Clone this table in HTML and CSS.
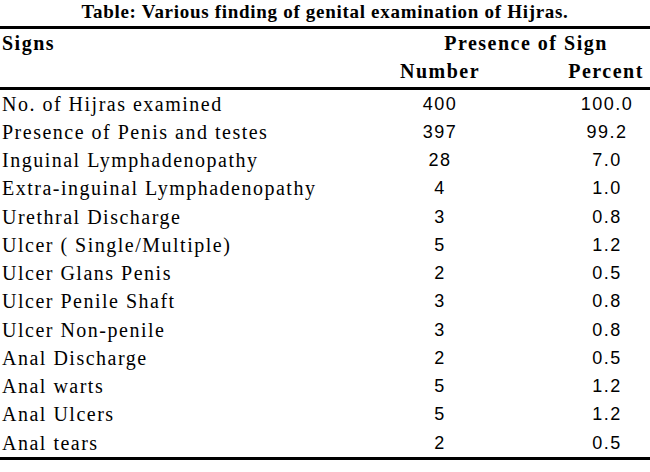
FILE: index.html
```html
<!DOCTYPE html>
<html>
<head>
<meta charset="utf-8">
<link rel="stylesheet" href="styles.css">
</head>
<body>
<div class="page">
  <div class="title">Table: Various finding of genital examination of Hijras.</div>
  <table class="data">
    <colgroup>
      <col class="c-sign">
      <col class="c-num">
      <col class="c-pct">
    </colgroup>
    <thead>
      <tr class="h1">
        <th class="sign">Signs</th>
        <th class="group" colspan="2">Presence of Sign</th>
      </tr>
      <tr class="h2">
        <th class="sign"></th>
        <th class="num">Number</th>
        <th class="pct">Percent</th>
      </tr>
    </thead>
    <tbody>
      <tr><td class="lbl">No. of Hijras examined</td><td class="num">400</td><td class="pct">100.0</td></tr>
      <tr><td class="lbl">Presence of Penis and testes</td><td class="num">397</td><td class="pct">99.2</td></tr>
      <tr><td class="lbl">Inguinal Lymphadenopathy</td><td class="num">28</td><td class="pct">7.0</td></tr>
      <tr><td class="lbl">Extra-inguinal Lymphadenopathy</td><td class="num">4</td><td class="pct">1.0</td></tr>
      <tr><td class="lbl">Urethral Discharge</td><td class="num">3</td><td class="pct">0.8</td></tr>
      <tr><td class="lbl">Ulcer ( Single/Multiple)</td><td class="num">5</td><td class="pct">1.2</td></tr>
      <tr><td class="lbl">Ulcer Glans Penis</td><td class="num">2</td><td class="pct">0.5</td></tr>
      <tr><td class="lbl">Ulcer Penile Shaft</td><td class="num">3</td><td class="pct">0.8</td></tr>
      <tr><td class="lbl">Ulcer Non-penile</td><td class="num">3</td><td class="pct">0.8</td></tr>
      <tr><td class="lbl">Anal Discharge</td><td class="num">2</td><td class="pct">0.5</td></tr>
      <tr><td class="lbl">Anal warts</td><td class="num">5</td><td class="pct">1.2</td></tr>
      <tr><td class="lbl">Anal Ulcers</td><td class="num">5</td><td class="pct">1.2</td></tr>
      <tr><td class="lbl">Anal tears</td><td class="num">2</td><td class="pct">0.5</td></tr>
    </tbody>
  </table>
</div>
</body>
</html>
```
FILE: styles.css
```css
html, body {
  margin: 0;
  padding: 0;
  background: #ffffff;
}
.page {
  width: 650px;
  height: 472px;
  overflow: hidden;
  font-family: "Liberation Serif", "Times New Roman", serif;
  color: #000;
}
.title {
  height: 26px;
  line-height: 23px;
  text-align: center;
  font-family: "Liberation Serif", "Times New Roman", serif;
  font-weight: bold;
  font-size: 19px;
  letter-spacing: 0.7px;
}
.data {
  width: 650px;
  table-layout: fixed;
  border-collapse: separate;
  border-spacing: 0;
  border-top: 3px solid #000;
  border-bottom: 3px solid #000;
}
.c-sign { width: 360px; }
.c-num { width: 160px; }
.c-pct { width: 130px; }
.data th {
  font-family: "Liberation Serif", "Times New Roman", serif;
  font-weight: bold;
  font-size: 20px;
  letter-spacing: 1.5px;
  padding: 0;
  vertical-align: middle;
}
.data .h1 {
  height: 28px;
}
.data .h2 {
  height: 33px;
}
.data .h2 th {
  border-bottom: 3px solid #000;
  padding-bottom: 2px;
}
.data th.sign {
  text-align: left;
  padding-left: 2px;
}
.data th.group {
  text-align: center;
  padding-left: 42px;
  padding-top: 1px;
}
.data th.num {
  text-align: center;
}
.data th.pct {
  text-align: center;
  padding-left: 42px;
}
.data tbody tr {
  height: 28.25px;
}
.data td {
  padding: 0;
  vertical-align: middle;
}
.data td.lbl {
  padding-left: 2px;
  font-family: "Liberation Serif", "Times New Roman", serif;
  font-size: 20px;
  letter-spacing: 1.5px;
}
.data td.num,
.data td.pct {
  font-family: "Liberation Sans", Arial, sans-serif;
  font-size: 18px;
  letter-spacing: 1.5px;
  text-align: center;
}
.data td.pct {
  padding-left: 44px;
}
```
